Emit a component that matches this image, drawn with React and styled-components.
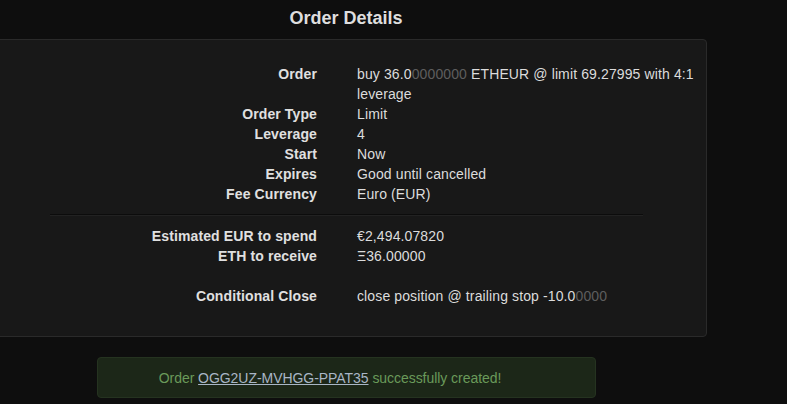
import React from 'react';
import styled, { createGlobalStyle } from 'styled-components';

const GlobalStyle = createGlobalStyle`
  html, body {
    margin: 0;
    padding: 0;
    background-color: #0e0e0e;
    overflow: hidden;
  }
  body {
    font-family: "Liberation Sans", Arial, sans-serif;
    font-size: 14px;
    line-height: 20px;
    letter-spacing: 0.12px;
    color: #dcdcdc;
  }
`;

const Page = styled.div`
  width: 722px;
  margin-left: -15px;
`;

const Title = styled.h3`
  margin: 0;
  padding-top: 7px;
  height: 32px;
  font-size: 18px;
  line-height: 22px;
  font-weight: bold;
  letter-spacing: 0;
  text-align: center;
  color: #dedede;
`;

const Panel = styled.div`
  background-color: #181818;
  border: 1px solid #2a2a2a;
  border-radius: 4px;
  padding: 24px 10px 30px 0;
`;

const DetailList = styled.dl`
  display: grid;
  grid-template-columns: 331px 1fr;
  column-gap: 40px;
  margin: 0;
`;

const Label = styled.dt`
  font-weight: bold;
  text-align: right;
  color: #e0e0e0;
  min-height: 20px;
`;

const Value = styled.dd`
  margin: 0;
  color: #dcdcdc;
  min-height: 20px;
`;

const Faded = styled.span`
  color: #5e5e5e;
`;

const Divider = styled.hr`
  border: 0;
  border-top: 1px solid #0c0c0c;
  border-bottom: 1px solid #222;
  margin: 10px 53px 10px 64px;
`;

const Alert = styled.div`
  margin: 20px 0 0 112px;
  width: 499px;
  height: 41px;
  box-sizing: border-box;
  padding: 0 35px 0 2px;
  display: flex;
  align-items: center;
  justify-content: center;
  white-space: pre;
  letter-spacing: -0.05px;
  background-color: #1c2718;
  border: 1px solid #253320;
  border-radius: 4px;
  color: #6a9a5a;
`;

const AlertLink = styled.a`
  color: #a9b6c6;
  text-decoration: underline;
`;

const rows = [
  { label: 'Order', value: (<>buy 36.0<Faded>0000000</Faded> ETHEUR @ limit 69.27995 with 4:1 leverage</>) },
  { label: 'Order Type', value: 'Limit' },
  { label: 'Leverage', value: '4' },
  { label: 'Start', value: 'Now' },
  { label: 'Expires', value: 'Good until cancelled' },
  { label: 'Fee Currency', value: 'Euro (EUR)' },
];

const totals = [
  { label: 'Estimated EUR to spend', value: '€2,494.07820' },
  { label: 'ETH to receive', value: 'Ξ36.00000' },
  { label: '', value: '' },
  { label: 'Conditional Close', value: (<>close position @ trailing stop -10.0<Faded>0000</Faded></>) },
];

const Details = ({ items }) => (
  <DetailList>
    {items.map((item, i) => (
      <React.Fragment key={i}>
        <Label>{item.label}</Label>
        <Value>{item.value}</Value>
      </React.Fragment>
    ))}
  </DetailList>
);

const App = () => {
  return (
    <Page>
      <GlobalStyle />
      <Title>Order Details</Title>
      <Panel>
        <Details items={rows} />
        <Divider />
        <Details items={totals} />
      </Panel>
      <Alert>
        {'Order '}<AlertLink href="#order">OGG2UZ-MVHGG-PPAT35</AlertLink>{' successfully created!'}
      </Alert>
    </Page>
  );
};

export default App;
